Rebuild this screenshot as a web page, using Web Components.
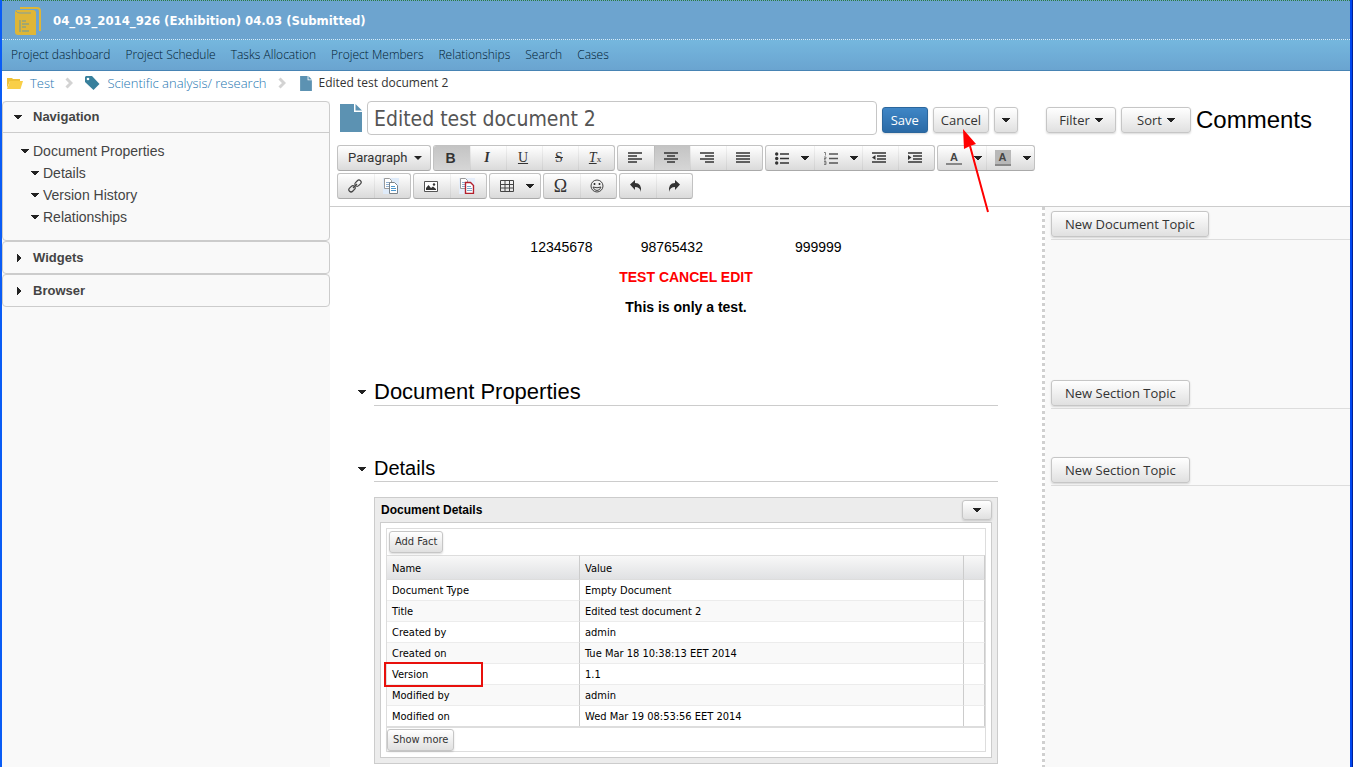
<!DOCTYPE html>
<html lang="en">
<head>
<meta charset="utf-8">
<title>Edited test document 2</title>
<style>
  html { height: 100%; background: #00209a; }
  body {
    margin: 0 1px 0 0; min-height: 100vh; box-sizing: border-box; display: flex;
    border-left: 2px solid #0a5cf5; border-right: 2px solid #0046ee;
    font: 14px/20px "Liberation Sans", Arial, sans-serif; color: #000; background: #fff;
  }
</style>
</head>
<body>
<case-app></case-app>

<script>
const ICONS = {
  caret: ['8 4', '<path d="M0 0h8v1h-1v1h-1v1h-1v1h-2v-1h-1v-1h-1v-1h-1z" fill="#222" shape-rendering="crispEdges"/>'],
  right: ['4 8', '<path d="M0 0h1v1h1v1h1v1h1v2h-1v1h-1v1h-1v1h-1z" fill="#222" shape-rendering="crispEdges"/>'],
  cases: ['26 28', '<path d="M5 1h17q3 0 3 3v20" fill="none" stroke="#dfb637" stroke-width="2"/><path d="M2 3h16q3 0 3 3v22H3q-3 0-3-3V5q0-2 2-2z" fill="#dfb637"/><path d="M1 4q1 2 4 2h11" fill="none" stroke="#7c9fa4"/><path d="M5 13v12M7 14h4M7 17h7M7 20h4M7 24h7" stroke="#8fa282" stroke-width="1.5" fill="none"/>'],
  folder: ['16 12', '<path d="M0 11V1h5l1 1h7v2H3z" fill="#eec137"/><path d="M3 4h13l-2.500 8H0z" fill="#f9cf48"/>'],
  chevron: ['8 12', '<path d="M1.500 1.500 6 6l-4.500 4.500" fill="none" stroke="#d3d3d3" stroke-width="3"/>'],
  tag: ['15 14', '<path d="M1 0h6l7.500 8-6 6L0 6V1z" fill="#38809c"/><circle cx="3" cy="3" r="1.300" fill="#fff"/>'],
  doc: ['22 28', '<path d="M0 0h14v8h8v20H0z" fill="#5c92b2"/><path d="M15.500 0 22 6.500h-6.500z" fill="#5c92b2"/>'],
  left: ['14 12', '<path d="M0 1h14M0 4h9M0 7h14M0 10h9" stroke="#333" stroke-width="1.600"/>'],
  center: ['14 12', '<path d="M0 1h14M3 4h8M0 7h14M3 10h8" stroke="#333" stroke-width="1.600"/>'],
  alignright: ['14 12', '<path d="M0 1h14M5 4h9M0 7h14M5 10h9" stroke="#333" stroke-width="1.600"/>'],
  justify: ['14 12', '<path d="M0 1h14M0 4h14M0 7h14M0 10h14" stroke="#333" stroke-width="1.600"/>'],
  bullets: ['14 13', '<g fill="#333"><circle cx="1.700" cy="2" r="1.700"/><circle cx="1.700" cy="6.500" r="1.700"/><circle cx="1.700" cy="11" r="1.700"/></g><path d="M5 2h9M5 6.500h9M5 11h9" stroke="#333" stroke-width="1.500"/>'],
  numbers: ['14 13', '<path d="M0 .5h1.500v3M0 5h2v1.500H0V8h2M0 9.500h2v3H0M0 11h2" stroke="#666" fill="none" stroke-width=".8"/><path d="M5 2h9M5 6.500h9M5 11h9" stroke="#555" stroke-width="1.300"/>'],
  outdent: ['14 12', '<path d="M0 1h14M5 4h9M5 7h9M0 10h14" stroke="#333" stroke-width="1.600"/><path d="M3.500 3v5L0 5.500z" fill="#333"/>'],
  indent: ['14 12', '<path d="M0 1h14M5 4h9M5 7h9M0 10h14" stroke="#333" stroke-width="1.600"/><path d="M0 3v5l3.500-2.500z" fill="#333"/>'],
  link: ['14 14', '<g fill="none" stroke="#444" stroke-width="1.200"><rect x="6.500" y="2" width="7" height="4.400" rx="2.200" transform="rotate(-45 10 4.200)"/><rect x=".5" y="7.600" width="7" height="4.400" rx="2.200" transform="rotate(-45 4 9.800)"/><path d="M5 9l4-4"/></g>'],
  copy: ['16 16', '<path d="M0 0h16v16H0z" fill="#dfebf9"/><path d="M1.500.5h5l2 2v8h-7z" fill="#fff" stroke="#999"/><path d="M3 4.500h4M3 6.500h3M3 8.500h3" stroke="#8fb0d0"/><path d="M6.500 4.500h5l3 3v8h-8z" fill="#fff" stroke="#7a8288"/><path d="M8 8.500h4M8 10.500h5M8 12.500h5" stroke="#4b96cd"/>'],
  copyred: ['16 16', '<path d="M0 0h16v16H0z" fill="#e6eefa"/><path d="M1.500.5h5l2 2v8h-7z" fill="#fff" stroke="#999"/><path d="M3 4.500h4M3 6.500h3M3 8.500h3" stroke="#8fb0d0"/><path d="M6.500 4.500h5l3 3v8h-8z" fill="#fff" stroke="#b3202c" stroke-width="1.400"/><path d="M8 8.500h4M8 10.500h5M8 12.500h5" stroke="#7fa9cc"/>'],
  image: ['14 11', '<path d="M.5.5h13v10H.5z" fill="#fff" stroke="#555"/><path d="M2 9V7l2.500-3 2.500 3 2-1.500L12 8v1z" fill="#333"/><circle cx="10" cy="3.500" r="1.200" fill="#333"/>'],
  table: ['14 12', '<path d="M.5.5h13v11H.5zM.5 4.500h13M.5 8h13M5 .5v11M9.500.5v11" fill="none" stroke="#444"/>'],
  smile: ['14 14', '<circle cx="7" cy="7" r="6" fill="none" stroke="#444"/><path d="M4.500 4v2M9.500 4v2" stroke="#333" stroke-width="1.600"/><path d="M3 8q4 1.500 8 0-1 3.500-4 3.500T3 8z" fill="none" stroke="#444"/>'],
  undo: ['13 12', '<path d="M0 4.500 5 0v3q7 0 6 9-1-5-6-5v3z" fill="#333"/>'],
  redo: ['13 12', '<path d="M13 4.500 8 0v3Q1 3 2 12q1-5 6-5v3z" fill="#333"/>'],
};

class UiIcon extends HTMLElement {
  connectedCallback() {
    const [size, art] = ICONS[this.getAttribute('name')];
    const [w, h] = size.split(' ');
    const width = this.getAttribute('width') || w;
    const height = Math.round(h * width / w);
    this.attachShadow({ mode: 'open' }).innerHTML =
      `<style>:host{display:inline-flex;flex:none}svg{display:block}</style>
       <svg width="${width}" height="${height}" viewBox="0 0 ${w} ${h}" aria-hidden="true">${art}</svg>`;
  }
}
customElements.define('ui-icon', UiIcon);

/* Registers an element whose shadow root is cloned from a template. */
function component(tag, html) {
  const template = document.createElement('template');
  template.innerHTML = html;
  customElements.define(tag, class extends HTMLElement {
    constructor() {
      super();
      this.attachShadow({ mode: 'open' }).append(template.content.cloneNode(true));
    }
  });
}

component('ui-button', `
  <style>
    :host { display: inline-flex; flex: none; }
    button {
      flex: 1; display: flex; align-items: center; justify-content: center; gap: 5px;
      height: var(--h, 26px); margin: 0; padding: 0 var(--px, 13px); white-space: nowrap;
      border: 1px solid #c6c6c6; border-radius: 3px;
      background: linear-gradient(#fff, #e0e0e0); box-shadow: 0 1px 2px rgba(0,0,0,.15);
      font: var(--size, 13px)/18px var(--face, "Open Sans", sans-serif); color: #333;
    }
    :host([primary]) button { background: linear-gradient(#3f86c6, #2a6aa6); border-color: #2b669c; color: #fff; }
  </style>
  <button type="button"><slot></slot></button>`);

component('tool-group', `
  <style>
    :host {
      display: inline-flex; height: 26px; box-sizing: border-box; overflow: hidden; flex: none;
      border: 1px solid #c2c2c2; border-bottom-color: #aaa; border-radius: 3px;
      background: linear-gradient(#fff, #dadada);
    }
  </style><slot></slot>`);

component('tool-button', `
  <style>
    :host { display: flex; width: 36px; }
    :host([split]) { width: 48px; }
    :host([on]) { background: linear-gradient(#c4c4c4, #d6d6d6); }
    button {
      flex: 1; display: flex; align-items: center; justify-content: center; gap: 12px;
      margin: 0; padding: 0 3px 0 0; border: 0; background: none; color: #333;
      font: 14px/16px "Liberation Serif", serif;
    }
    :host([split]) button { padding: 0 0 0 4px; }
    :host(:not(:first-child)) button { border-left: 1px solid rgba(0,0,0,.05); }
  </style>
  <button type="button"><slot></slot></button>`);

component('app-header', `
  <style>
    :host { display: block; }
    .title {
      height: 39px; box-sizing: border-box; display: flex; align-items: center; gap: 12px;
      padding: 2px 13px 0; border-top: 1px dotted #2a7a3c; background: #6da4cf;
    }
    h1 { margin: 0; font: bold 13px/18px "DejaVu Sans Condensed", "DejaVu Sans", sans-serif; color: #fff; }
    nav {
      height: 32px; box-sizing: border-box; display: flex; align-items: center; gap: 15px; padding: 0 9px;
      border-top: 1px dotted #d8ecf8; border-bottom: 1px solid #4884b4;
      background: linear-gradient(#75b7de, #6aa4d0);
    }
    a { font: 300 12px/18px "Open Sans", sans-serif; color: #001a30; text-decoration: none; }
  </style>
  <div class="title"><ui-icon name="cases"></ui-icon><h1>04_03_2014_926 (Exhibition) 04.03 (Submitted)</h1></div>
  <nav aria-label="Project">
    <a href="#">Project dashboard</a><a href="#">Project Schedule</a><a href="#">Tasks Allocation</a>
    <a href="#">Project Members</a><a href="#">Relationships</a><a href="#">Search</a><a href="#">Cases</a>
  </nav>`);

component('crumb-trail', `
  <style>
    :host {
      display: flex; align-items: center; height: 30px; box-sizing: border-box; padding: 0 5px 6px;
      font: 12px/18px "Open Sans", sans-serif; color: #333;
    }
    a { color: #2475b0; text-decoration: none; font-weight: 300; font-size: 13px; }
    a, b { margin: 0 11px 0 7px; }
    b { font-weight: 400; }
    ui-icon[name=chevron] { margin-right: 12px; }
    ui-icon[name=doc] { margin-left: 2px; }
  </style>
  <ui-icon name="folder"></ui-icon><a href="#">Test</a><ui-icon name="chevron"></ui-icon>
  <ui-icon name="tag"></ui-icon><a href="#">Scientific analysis/ research</a><ui-icon name="chevron"></ui-icon>
  <ui-icon name="doc" width="12"></ui-icon><b>Edited test document 2</b>`);

component('side-panel', `
  <style>
    :host { display: block; border: 1px solid #ccc; border-radius: 4px; background: #f9f9f9; }
    button {
      display: grid; grid-template-columns: 19px 1fr; align-items: center; width: 100%;
      height: 31px; margin: 0; padding: 0 10px 0 11px; border: 0; background: none;
      font: bold 13px/18px "Liberation Sans", Arial, sans-serif; color: #444; text-align: left;
    }
    :host([open]) button { border-bottom: 1px solid #ccc; }
    .mark { display: flex; }
    .down, :host([open]) .side { display: none; }
    .side { margin-left: 3px; }
    :host([open]) .down { display: inline-flex; }
  </style>
  <button type="button"><span class="mark"><ui-icon class="down" name="caret"></ui-icon><ui-icon class="side" name="right"></ui-icon></span><slot name="title"></slot></button>
  <slot></slot>`);

component('side-nav', `
  <style>
    :host { display: flex; flex-direction: column; background: #f9f9f9; }
    ul { list-style: none; margin: 0; padding: 0 0 0 18px; }
    side-panel > ul { padding-top: 7px; padding-bottom: 12px; }
    ul ul { padding-left: 10px; }
    li a { display: flex; align-items: center; gap: 4px; height: 22px; color: #444; text-decoration: none; }
  </style>
  <side-panel open><span slot="title">Navigation</span>
    <ul><li><a href="#"><ui-icon name="caret"></ui-icon>Document Properties</a>
      <ul>
        <li><a href="#"><ui-icon name="caret"></ui-icon>Details</a></li>
        <li><a href="#"><ui-icon name="caret"></ui-icon>Version History</a></li>
        <li><a href="#"><ui-icon name="caret"></ui-icon>Relationships</a></li>
      </ul></li></ul>
  </side-panel>
  <side-panel><span slot="title">Widgets</span></side-panel>
  <side-panel><span slot="title">Browser</span></side-panel>`);

component('editor-toolbar', `
  <style>
    :host { display: flex; flex-wrap: wrap; gap: 2px; }
    select {
      appearance: none; width: 92px; margin: 0; padding: 0 10px; border: 0;
      background: url("data:image/svg+xml,%3Csvg xmlns='http://www.w3.org/2000/svg' width='8' height='4'%3E%3Cpath d='M0 0h8L4 4z' fill='%23222'/%3E%3C/svg%3E") no-repeat right 8px center;
      font: 13px/24px Roboto, sans-serif; color: #333;
    }
    .glyph { font-weight: bold; }
    .bold { font: bold 14px/16px "Liberation Sans", sans-serif; }
    .sub { font-size: 9px; }
    .fore, .back { font: bold 11px/12px "Liberation Sans", sans-serif; color: #444; width: 16px; border-bottom: 2px solid #888; }
    .back { background: #b8b8b8; line-height: 14px; }
    .wide { width: 50px; }
    .omega { font-size: 18px; }
  </style>
  <tool-group><select aria-label="Text style"><option>Paragraph</option></select></tool-group>
  <tool-group>
    <tool-button on><span class="bold">B</span></tool-button>
    <tool-button><i class="glyph">I</i></tool-button>
    <tool-button><u>U</u></tool-button>
    <tool-button><s>S</s></tool-button>
    <tool-button><span><i><u>T</u></i><span class="sub">x</span></span></tool-button>
  </tool-group>
  <tool-group>
    <tool-button><ui-icon name="left"></ui-icon></tool-button>
    <tool-button on><ui-icon name="center"></ui-icon></tool-button>
    <tool-button><ui-icon name="alignright"></ui-icon></tool-button>
    <tool-button><ui-icon name="justify"></ui-icon></tool-button>
  </tool-group>
  <tool-group>
    <tool-button split><ui-icon name="bullets"></ui-icon><ui-icon name="caret"></ui-icon></tool-button>
    <tool-button split><ui-icon name="numbers"></ui-icon><ui-icon name="caret"></ui-icon></tool-button>
    <tool-button><ui-icon name="outdent"></ui-icon></tool-button>
    <tool-button><ui-icon name="indent"></ui-icon></tool-button>
  </tool-group>
  <tool-group>
    <tool-button split><span class="fore">A</span><ui-icon name="caret"></ui-icon></tool-button>
    <tool-button split><span class="back">A</span><ui-icon name="caret"></ui-icon></tool-button>
  </tool-group>
  <tool-group>
    <tool-button><ui-icon name="link"></ui-icon></tool-button>
    <tool-button><ui-icon name="copy"></ui-icon></tool-button>
  </tool-group>
  <tool-group>
    <tool-button><ui-icon name="image"></ui-icon></tool-button>
    <tool-button><ui-icon name="copyred"></ui-icon></tool-button>
  </tool-group>
  <tool-group>
    <tool-button split class="wide"><ui-icon name="table"></ui-icon><ui-icon name="caret"></ui-icon></tool-button>
  </tool-group>
  <tool-group>
    <tool-button><span class="omega">Ω</span></tool-button>
    <tool-button><ui-icon name="smile"></ui-icon></tool-button>
  </tool-group>
  <tool-group>
    <tool-button><ui-icon name="undo"></ui-icon></tool-button>
    <tool-button><ui-icon name="redo"></ui-icon></tool-button>
  </tool-group>`);

component('edit-bar', `
  <style>
    :host { display: flex; border-bottom: 1px solid #ccc; padding-bottom: 7px; }
    .edit { flex: 1; min-width: 0; padding-left: 7px; }
    .title { display: flex; align-items: center; gap: 5px; padding: 0 28px 10px 3px; }
    input {
      flex: 1; min-width: 0; height: 34px; box-sizing: border-box; margin: 0; padding: 2px 6px 0;
      border: 1px solid #c6c6c6; border-radius: 4px; background: #fff;
      font: 21px/28px "DejaVu Sans Condensed", "DejaVu Sans", sans-serif; color: #555;
    }
    .title ui-button { --px: 7px; margin-top: 3px; }
    .title ui-button[primary] { --px: 8px; }
    .cancel { position: relative; }
    .arrow { position: absolute; left: 29px; top: 22px; z-index: 2; pointer-events: none; }
    .comments { width: 304px; display: flex; align-items: center; gap: 5px; height: 37px; }
    .comments ui-button { --px: 0; width: 70px; }
    h2 { margin: 0; font: 24px/28px "Liberation Sans", Arial, sans-serif; }
  </style>
  <div class="edit">
    <div class="title">
      <ui-icon name="doc"></ui-icon>
      <input type="text" aria-label="Document title" value="Edited test document 2">
      <ui-button primary>Save</ui-button>
      <ui-button class="cancel">Cancel
        <svg class="arrow" width="30" height="84" viewBox="0 0 30 84" aria-hidden="true"><path d="M8 17 26 83" stroke="#f00" stroke-width="2"/><path d="M1 0 14 15 8 17 2 20z" fill="#f00"/></svg>
      </ui-button>
      <ui-button><ui-icon name="caret"></ui-icon></ui-button>
    </div>
    <editor-toolbar></editor-toolbar>
  </div>
  <div class="comments">
    <ui-button>Filter <ui-icon name="caret"></ui-icon></ui-button>
    <ui-button>Sort <ui-icon name="caret"></ui-icon></ui-button>
    <h2>Comments</h2>
  </div>`);

component('doc-section', `
  <style>
    :host { display: grid; grid-template-columns: 16px 1fr; align-items: center; }
    h2 { margin: 0; border-bottom: 1px solid #ccc; font-weight: 400; font-size: var(--size, 22px); line-height: var(--line, 27px); }
  </style>
  <ui-icon name="caret" width="8"></ui-icon><h2><slot></slot></h2>`);

component('fact-table', `
  <style>
    :host {
      display: block; padding: 0 5px 5px; border: 1px solid #ccc; background: #ececec;
      font: 11px/20px "DejaVu Sans Condensed", "DejaVu Sans", sans-serif; color: #000;
    }
    header { display: flex; align-items: center; justify-content: space-between; height: 24px; }
    h3 { margin: 0 1px; font: bold 12px/16px "Liberation Sans", Arial, sans-serif; }
    header ui-button { --h: 20px; --px: 10px; }
    .frame { padding: 5px; border: 1px solid #ccc; background: #fff; }
    .grid { border: 1px solid #ddd; }
    .grid ui-button { --size: 11px; --px: 5px; --h: 22px; --face: "DejaVu Sans Condensed", "DejaVu Sans", sans-serif; }
    .bar { display: flex; padding: 2px; }
    .foot { display: flex; padding-top: 1px; }
    table { width: 100%; table-layout: fixed; border-collapse: separate; border-spacing: 0; border-bottom: 2px solid #ddd; }
    col.name { width: 193px; } col.end { width: 21px; }
    th, td { height: 19px; padding: 1px 5px 0; line-height: 19px; border-right: 1px solid #ccc; border-bottom: 1px solid #ececec; font-weight: 400; text-align: left; }
    thead th { height: 22px; border-top: 1px solid #ddd; border-bottom-color: #ddd; background: linear-gradient(#f8f8f8, #e0e1e3); }
    tbody tr:nth-child(even) { background: #f9f9f9; }
    tbody tr:last-child > * { border-bottom: 0; }
    .mark { position: relative; }
    .mark::after { content: ""; position: absolute; left: -3px; top: -2px; width: 95px; height: 21px; border: 2px solid #e8100c; }
  </style>
  <header><h3>Document Details</h3><ui-button><ui-icon name="caret"></ui-icon></ui-button></header>
  <div class="frame"><div class="grid">
    <div class="bar"><ui-button>Add Fact</ui-button></div>
    <table>
      <colgroup><col class="name"><col><col class="end"></colgroup>
      <thead><tr><th>Name</th><th>Value</th><th></th></tr></thead>
      <tbody>
        <tr><th scope="row">Document Type</th><td>Empty Document</td><td></td></tr>
        <tr><th scope="row">Title</th><td>Edited test document 2</td><td></td></tr>
        <tr><th scope="row">Created by</th><td>admin</td><td></td></tr>
        <tr><th scope="row">Created on</th><td>Tue Mar 18 10:38:13 EET 2014</td><td></td></tr>
        <tr><th scope="row" class="mark">Version</th><td>1.1</td><td></td></tr>
        <tr><th scope="row">Modified by</th><td>admin</td><td></td></tr>
        <tr><th scope="row">Modified on</th><td>Wed Mar 19 08:53:56 EET 2014</td><td></td></tr>
      </tbody>
    </table>
    <div class="foot"><ui-button>Show more</ui-button></div>
  </div></div>`);

component('doc-body', `
  <style>
    :host { display: block; flex: 1; min-width: 0; padding: 30px 44px 3px 28px; }
    p { margin: 0 0 10px 16px; text-align: center; }
    .codes { display: flex; justify-content: center; }
    .codes span + span { margin-left: 48px; }
    .codes span + span + span { margin-left: 92px; }
    .alert { color: #f00; }
    .gap { margin-top: 61px; }
    .second { --size: 20px; --line: 25px; margin-top: 50px; }
    fact-table { margin: 15px 0 0 16px; }
  </style>
  <p class="codes"><span>12345678</span><span>98765432</span><span>999999</span></p>
  <p class="alert"><b>TEST CANCEL EDIT</b></p>
  <p><b>This is only a test.</b></p>
  <doc-section class="gap">Document Properties</doc-section>
  <doc-section class="second">Details</doc-section>
  <fact-table></fact-table>`);

component('comment-rail', `
  <style>
    :host { display: flex; width: 308px; background: #f9f9f9; }
    .grip { width: 3px; background: repeating-linear-gradient(#d0d0d0 0 3px, #fff 3px 6px); }
    .topics { flex: 1; margin-left: 6px; padding-top: 4px; }
    .topic { border-bottom: 1px solid #ddd; padding-bottom: 2px; display: flex; }
    .topic + .topic { margin-top: 140px; }
    .topic + .topic + .topic { margin-top: 48px; }
  </style>
  <div class="grip"></div>
  <div class="topics">
    <div class="topic"><ui-button>New Document Topic</ui-button></div>
    <div class="topic"><ui-button>New Section Topic</ui-button></div>
    <div class="topic"><ui-button>New Section Topic</ui-button></div>
  </div>`);

component('case-app', `
  <style>
    :host { flex: 1; min-width: 0; display: flex; flex-direction: column; }
    .body { flex: 1; display: grid; grid-template-columns: 328px 1fr; }
    main { min-width: 0; display: flex; flex-direction: column; }
    .work { flex: 1; display: flex; }
  </style>
  <app-header></app-header>
  <crumb-trail></crumb-trail>
  <div class="body">
    <side-nav></side-nav>
    <main><edit-bar></edit-bar><div class="work"><doc-body></doc-body><comment-rail></comment-rail></div></main>
  </div>`);
</script>
</body>
</html>
